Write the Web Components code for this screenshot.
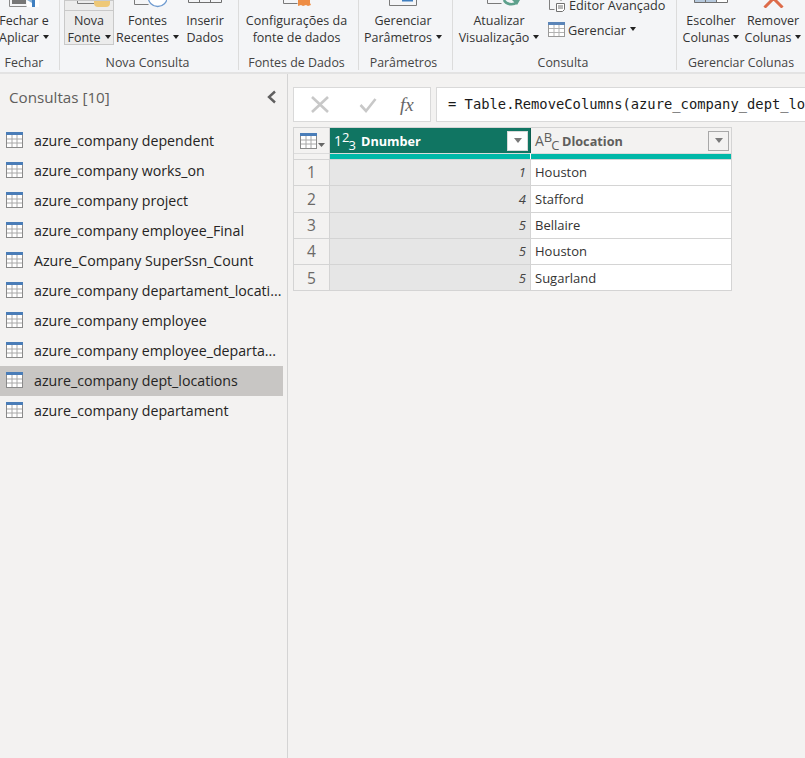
<!DOCTYPE html>
<html><head><meta charset="utf-8"><style>
html,body{margin:0;padding:0;height:100%;overflow:hidden;background:#f3f2f1}
body{font-family:"Open Sans","Noto Sans",sans-serif;color:#252423}
app-shell{height:758px}
</style></head><body>
<app-shell>
  <rb-bar slot="ribbon">
    <rb-group label="Fechar" w="60" pr="11">
      <rb-btn w="48" caret icon="fechar"><span>Fechar e</span><span>Aplicar</span></rb-btn>
    </rb-group>
    <rb-group label="Nova Consulta" w="179" pad="4" pr="3">
      <rb-btn w="50" caret hot icon="nova"><span>Nova</span><span>Fonte</span></rb-btn>
      <rb-btn w="67" caret icon="recent"><span>Fontes</span><span>Recentes</span></rb-btn>
      <rb-btn w="48" icon="table"><span>Inserir</span><span>Dados</span></rb-btn>
    </rb-group>
    <rb-group label="Fontes de Dados" w="120" pad="4" pr="4">
      <rb-btn w="107" icon="config"><span>Configurações da</span><span>fonte de dados</span></rb-btn>
    </rb-group>
    <rb-group label="Parâmetros" w="94" pad="4" pr="4">
      <rb-btn w="80" caret icon="param"><span>Gerenciar</span><span>Parâmetros</span></rb-btn>
    </rb-group>
    <rb-group label="Consulta" w="224" pad="4" pr="3">
      <rb-btn w="84" caret icon="refresh"><span>Atualizar</span><span>Visualização</span></rb-btn>
      <rb-stack>
        <rb-small icon="editor">Editor Avançado</rb-small>
        <rb-small icon="grid" caret>Gerenciar</rb-small>
      </rb-stack>
    </rb-group>
    <rb-group label="Gerenciar Colunas" w="128" pad="4" last>
      <rb-btn w="60" caret icon="table2"><span>Escolher</span><span>Colunas</span></rb-btn>
      <rb-btn w="64" caret icon="remove"><span>Remover</span><span>Colunas</span></rb-btn>
    </rb-group>
  </rb-bar>
  <q-panel slot="side" title="Consultas [10]">
    <q-item>azure_company dependent</q-item>
    <q-item>azure_company works_on</q-item>
    <q-item>azure_company project</q-item>
    <q-item>azure_company employee_Final</q-item>
    <q-item>Azure_Company SuperSsn_Count</q-item>
    <q-item>azure_company departament_locati...</q-item>
    <q-item>azure_company employee</q-item>
    <q-item>azure_company employee_departa...</q-item>
    <q-item selected>azure_company dept_locations</q-item>
    <q-item>azure_company departament</q-item>
  </q-panel>
  <formula-bar slot="main">= Table.RemoveColumns(azure_company_dept_lo</formula-bar>
  <data-grid slot="main"></data-grid>
</app-shell>
<script>
const ICONS={
fechar:`<svg width="30" height="8" viewBox="0 0 30 8"><path d="M.5 0v6.500h17" stroke="#8a8a8a" fill="none"/><rect x="3" y="0" width="14" height="4" fill="#777"/><rect x="18" y="0" width="12" height="7" fill="#fff"/><rect x="23" y="0" width="3" height="7" fill="#3f7fc0"/><path d="M18 0h5v3z" fill="#8db4d8"/></svg>`,
nova:`<svg width="46" height="10" viewBox="0 0 46 10"><path d="M11.500 0v3.500h16.500" stroke="#7a7a7a" fill="none"/><path d="M28 0h16v3a4 4 0 0 1-4 4h-8a4 4 0 0 1-4-4z" fill="#eec877"/></svg>`,
recent:`<svg width="39" height="9" viewBox="0 0 39 9"><path d="M6.500 0v4.500h14" stroke="#7a7a7a" fill="none"/><circle cx="29.700" cy="-3" r="9.500" fill="#fff" stroke="#6f9bd0" stroke-width="1.300"/></svg>`,
table:`<svg width="34" height="4" viewBox="0 0 34 4"><path d="M.5 0v2.500h33V0M11.500 0v2M22.500 0v2" stroke="#707070" fill="none"/></svg>`,
config:`<svg width="28" height="7" viewBox="0 0 28 7"><path d="M.5 0v3.500h14" stroke="#7a7a7a" fill="none"/><path d="M15 0h12v3l1 2-3 1-2-1-3 1-2-1-3 1z" fill="#ee8d45"/></svg>`,
param:`<svg width="28" height="6" viewBox="0 0 28 6"><path d="M.5 0v5.500h27V0" stroke="#7a7a7a" fill="none"/><rect x="13" y="0" width="11" height="1.500" fill="#3f7fc0"/></svg>`,
refresh:`<svg width="42" height="8" viewBox="0 0 42 8"><path d="M9.500 0v3.500h14" stroke="#7a7a7a" fill="none"/><path d="M26 0a7.500 6 0 0 0 13 2" stroke="#5da08c" stroke-width="2.600" fill="none"/><path d="M34 0h8l-3 5z" fill="#5da08c"/></svg>`,
table2:`<svg width="34" height="3" viewBox="0 0 34 3"><rect x="0" y="0" width="34" height="3" fill="#fff"/><rect x="0" y="0" width="23" height="3" fill="#b6c9dd"/><path d="M.5 0v2.500h33V0M11.500 0v2M22.500 0v2" stroke="#707070" fill="none"/></svg>`,
remove:`<svg width="21" height="8" viewBox="0 0 21 8"><path d="M1.500 7.500L10.500-1.500L19.500 7.500" stroke="#dd6b4a" stroke-width="3" fill="none"/></svg>`,
editor:`<svg width="18" height="15" viewBox="0 0 18 15" style="display:block"><path d="M1.500 0v12.500h5M13 0v4" stroke="#808080" fill="none"/><path d="M8.500 6.500h8v6l-2 2h-6z" fill="#fff" stroke="#707070"/><path d="M10 9h5M10 11h5" stroke="#707070"/></svg>`,
grid:`<svg width="17" height="15" viewBox="0 0 17 15" style="display:block"><rect x=".5" y=".5" width="16" height="14" fill="#fff" stroke="#999"/><rect x="0" y="0" width="17" height="3" fill="#5b85b8"/><path d="M6 3v11M11 3v11M1 6.500h15M1 10.500h15" stroke="#b3b3b3"/></svg>`
};
const tableIcon=c=>`<svg width="17" height="16" viewBox="0 0 17 16" style="display:block"><rect x=".5" y=".5" width="16" height="15" fill="#fff" stroke="#8a8a8a"/><rect x="0" y="0" width="17" height="3" fill="${c}"/><path d="M6 3v12M11 3v12M1 7h15M1 11h15" stroke="#a8a8a8"/></svg>`;
const def=(n,html,extra)=>customElements.define(n,class extends HTMLElement{
  constructor(){super();this.attachShadow({mode:'open'}).innerHTML=html}
  connectedCallback(){extra&&extra(this)}
});
def('app-shell',`<style>
:host{display:flex;flex-direction:column;width:805px}
.body{flex:1;display:flex;min-height:0}
.main{flex:1;display:flex;flex-direction:column;padding:13px 0 0 5px;min-width:0;overflow:hidden}
</style><slot name="ribbon"></slot><div class="body"><slot name="side"></slot><div class="main"><slot name="main"></slot></div></div>`);
def('rb-bar',`<style>
:host{display:flex;height:72px;flex:none;background:#f4f5f7;border-bottom:2px solid #e3e3e3;overflow:hidden;font-size:12.500px;color:#333}
</style><slot></slot>`);
def('rb-group',`<style>
:host{display:block;flex:none;box-sizing:border-box}
.w{display:flex;flex-direction:column;height:70px;border-right:1px solid #dcdcdc;box-sizing:border-box}
.c{display:flex;height:54px;flex:none}
.l{text-align:center;font-size:12.400px;line-height:18px;color:#444;white-space:nowrap}
</style><div class="w"><div class="c"><slot></slot></div><div class="l"></div></div>`,el=>{
  el.style.width=el.getAttribute('w')+'px';
  const s=el.shadowRoot,l=s.querySelector('.l');
  l.textContent=el.getAttribute('label');
  l.style.paddingRight=(el.getAttribute('pr')||0)+'px';
  s.querySelector('.c').style.paddingLeft=(el.getAttribute('pad')||0)+'px';
  if(el.hasAttribute('last'))s.querySelector('.w').style.borderRight='0';
});
def('rb-btn',`<style>
:host{display:block;flex:none;text-align:center;box-sizing:border-box;height:45px;line-height:17px;white-space:nowrap}
:host([hot]){background:#ececec;outline:1px solid #c9c9c9;outline-offset:-1px}
.i{height:10px;margin-bottom:2px;display:flex;justify-content:center;align-items:flex-start;overflow:visible}
:host([hot]) .i{border-bottom:1px solid #c9c9c9;margin-bottom:1px}
.i svg{display:block;flex:none}
.t{display:flex;flex-direction:column;align-items:center}
.t.caret ::slotted(span:last-child)::after{content:"";display:inline-block;border:3.500px solid transparent;border-top:4px solid #222;border-bottom:0;margin-left:4px;vertical-align:3px}
</style><div class="i"></div><div class="t"><slot></slot></div>`,el=>{
  el.style.width=el.getAttribute('w')+'px';
  const s=el.shadowRoot;
  s.querySelector('.i').innerHTML=ICONS[el.getAttribute('icon')]||'';
  if(el.hasAttribute('caret'))s.querySelector('.t').classList.add('caret');
});
def('rb-stack',`<style>:host{display:flex;flex-direction:column;gap:10px;margin-top:-3px;padding-left:7px}</style><slot></slot>`);
def('rb-small',`<style>
:host{display:flex;align-items:center;gap:3px;height:15px;white-space:nowrap;font-size:12.700px}
.c{display:none;border:3.500px solid transparent;border-top:4px solid #222;border-bottom:0;margin:-2px 0 0 1px}
:host([caret]) .c{display:inline-block}
.i{flex:none}
</style><span class="i"></span><slot></slot><span class="c"></span>`,el=>{el.shadowRoot.querySelector('.i').innerHTML=ICONS[el.getAttribute('icon')]});
def('q-panel',`<style>
:host{display:block;width:287px;flex:none;border-right:1px solid #d4d4d4;height:100%}
.h{display:flex;justify-content:space-between;align-items:center;height:45px;margin-bottom:6px;padding:0 10px 0 9px;font-size:15.200px;color:#605e5c}
.l{display:flex;flex-direction:column;padding-right:4px}
svg{display:block}
</style><div class="h"><span class="t"></span><svg width="11" height="14" viewBox="0 0 11 14"><path d="M9 1.500L3 7l6 5.500" stroke="#5f5f5f" stroke-width="2.400" fill="none"/></svg></div><div class="l"><slot></slot></div>`,el=>{el.shadowRoot.querySelector('.t').textContent=el.getAttribute('title')});
def('q-item',`<style>
:host{display:flex;align-items:center;height:30.100px;font-size:14.200px;color:#252423;white-space:nowrap;padding-left:6px;gap:11px}
:host([selected]){background:#c8c6c4}
.i{display:block;margin-top:-1px}
</style><span class="i">${tableIcon('#4a7db8')}</span><span><slot></slot></span>`);
def('formula-bar',`<style>
:host{display:flex;gap:5px;height:35px;flex:none;width:600px}
.b{width:138px;flex:none;background:#fff;border:1px solid #d9d9d9;display:flex;align-items:center;box-sizing:border-box;padding-left:17px}
.b svg{flex:none;display:block}
.f{flex:1;background:#fff;border:1px solid #d9d9d9;border-right:0;font:13.800px/33px "DejaVu Sans Mono","Liberation Mono",monospace;color:#1a1a1a;padding-left:11px;white-space:nowrap;overflow:hidden}
.fx{font:italic 19px "Liberation Serif",serif;color:#666;margin-left:23px}
</style><div class="b"><svg width="18" height="17" viewBox="0 0 18 17"><path d="M1 1l16 15M17 1L1 16" stroke="#c8c8c8" stroke-width="2.600"/></svg><svg style="margin-left:30px" width="18" height="16" viewBox="0 0 18 16"><path d="M1.500 8l5.500 6L16.500 2" stroke="#c8c8c8" stroke-width="2.600" fill="none"/></svg><span class="fx">fx</span></div><div class="f"><slot></slot></div>`);
const rows=[[1,'Houston'],[4,'Stafford'],[5,'Bellaire'],[5,'Houston'],[5,'Sugarland']];
def('data-grid',`<style>
:host{display:grid;grid-template-columns:36px 201px 200px;width:439px;margin-top:5px;border:1px solid #d4d4d4;box-sizing:border-box;font-size:13px;flex:none}
.h{height:25px;display:flex;align-items:center;box-sizing:border-box;border-right:1px solid #d4d4d4;font-weight:700;font-size:12.700px}
.c0{background:#f3f2f1;padding-left:6px;gap:1px}
.c0 svg:last-child{margin-top:9px}
.h1{background:#107562;color:#fff;border-right:1px solid #0c5d4e}
.h2{background:#f3f2f1;color:#605e5c;border-right:0}
.ty{width:31px;padding-left:4px;font-weight:400;font-size:14px;flex:none;box-sizing:border-box;white-space:nowrap}
.ty sup,.ty sub{font-size:13px;line-height:0}
.ty sup{vertical-align:4px}
.ty sub{vertical-align:-4px;margin-left:-1px}
.n{flex:1}
.dd{width:21px;height:20px;background:#fff;border:1px solid #d9d9d9;box-sizing:border-box;margin-right:2px;display:flex;align-items:center;justify-content:center}
.h2 .dd{background:#f3f2f1;border:1.500px solid #a8a8a8}
.dd::after{content:"";border:4.500px solid transparent;border-top:5px solid #7a7a7a;border-bottom:0}
.bar{height:5px;border-top:1px solid #dcdcdc;background:#00b8a8;border-right:1px solid #fff}
.bar.g{background:#f3f2f1;border-right:1px solid #d4d4d4}
.r{height:26.300px;box-sizing:border-box;border-top:1px solid #d4d4d4;display:flex;align-items:center;white-space:nowrap;padding-bottom:.5px}
.rn{justify-content:center;font-size:15.500px;color:#6b6967;background:#f3f2f1;border-right:1px solid #d4d4d4}
.v{justify-content:flex-end;padding-right:4px;background:#e6e6e6;font-style:italic;color:#444;border-right:1px solid #d4d4d4}
.s{padding-left:4px;background:#fff;color:#333}
</style>
<div class="h c0">${tableIcon('#4a7db8')}<svg width="7" height="4" viewBox="0 0 7 4" style="display:block"><path d="M0 0h7L3.500 4z" fill="#666"/></svg></div>
<div class="h h1"><span class="ty">1<sup>2</sup><sub>3</sub></span><span class="n">Dnumber</span><span class="dd"></span></div>
<div class="h h2"><span class="ty">A<sup>B</sup><sub>C</sub></span><span class="n">Dlocation</span><span class="dd"></span></div>
<div class="bar g"></div><div class="bar"></div><div class="bar" style="border-right:0"></div>
${rows.map((r,i)=>`<div class="r rn">${i+1}</div><div class="r v">${r[0]}</div><div class="r s">${r[1]}</div>`).join('')}`);
</script>
</body></html>
